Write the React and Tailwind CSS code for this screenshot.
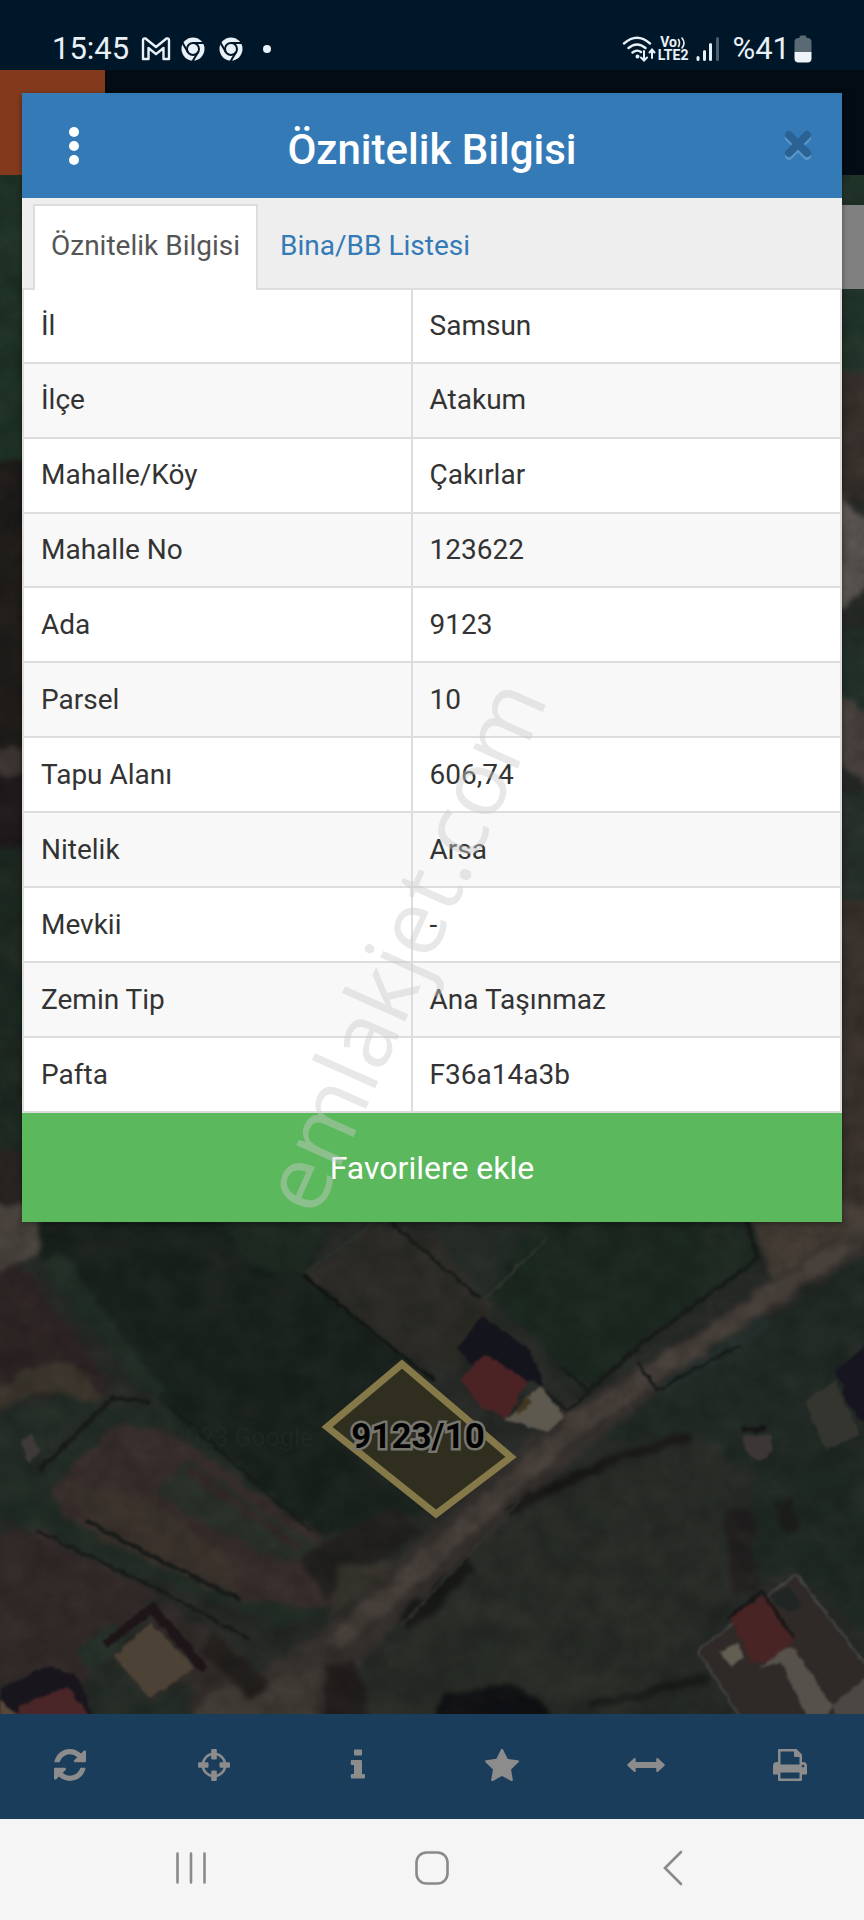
import { useState } from 'react';

const ROWS = [
    ['İl', 'Samsun'],
    ['İlçe', 'Atakum'],
    ['Mahalle/Köy', 'Çakırlar'],
    ['Mahalle No', '123622'],
    ['Ada', '9123'],
    ['Parsel', '10'],
    ['Tapu Alanı', '606,74'],
    ['Nitelik', 'Arsa'],
    ['Mevkii', '-'],
    ['Zemin Tip', 'Ana Taşınmaz'],
    ['Pafta', 'F36a14a3b'],
];

const TABS = ['Öznitelik Bilgisi', 'Bina/BB Listesi'];

const TOOLS = [
    {
        label: 'Yenile',
        icon: (
            <svg width="32" height="32" viewBox="0 0 1536 1536" fill="currentColor">
                <path d="M1511 928q0 5-1 7-64 268-268 434.5T764 1536q-146 0-282.5-55T238 1324l-129 129q-19 19-45 19t-45-19-19-45V960q0-26 19-45t45-19h448q26 0 45 19t19 45-19 45l-137 137q71 66 161 102t187 36q134 0 250-65t186-179q11-17 53-117 8-23 30-23h192q13 0 22.500 9.500t9.500 22.500zm25-800v448q0 26-19 45t-45 19h-448q-26 0-45-19t-19-45 19-45l138-138Q969 256 768 256q-134 0-250 65T332 500q-11 17-53 117-8 23-30 23H50q-13 0-22.500-9.500T18 608v-7q65-268 270-434.500T768 0q146 0 284 55.500T1297 212l130-129q19-19 45-19t45 19 19 45z" />
            </svg>
        ),
    },
    {
        label: 'Konum',
        icon: (
            <svg width="32" height="32" viewBox="0 0 32 32" fill="currentColor">
                <circle cx="16" cy="16" r="11.200" fill="none" stroke="currentColor" strokeWidth="2.600" />
                <rect x="13.200" y="0" width="5.600" height="10.500" rx="1.200" />
                <rect x="13.200" y="21.500" width="5.600" height="10.500" rx="1.200" />
                <rect x="0" y="13.200" width="10.500" height="5.600" rx="1.200" />
                <rect x="21.500" y="13.200" width="10.500" height="5.600" rx="1.200" />
            </svg>
        ),
    },
    {
        label: 'Bilgi',
        icon: (
            <svg width="16" height="32" viewBox="0 0 16 32" fill="currentColor">
                <rect x="4" y="0.500" width="8" height="6" rx="0.800" />
                <path d="M1.800 11H11a1 1 0 0 1 1 1v13h2a1 1 0 0 1 1 1v2.500a1 1 0 0 1-1 1H1.800a1 1 0 0 1-1-1V26a1 1 0 0 1 1-1H4v-9H1.800a1 1 0 0 1-1-1v-3a1 1 0 0 1 1-1z" />
            </svg>
        ),
    },
    {
        label: 'Favoriler',
        icon: (
            <svg width="34" height="34" viewBox="0 20 1664 1620" fill="currentColor">
                <path d="M1664 647q0 22-26 48l-363 354 86 500q1 7 1 20 0 21-10.500 35.500t-30.500 14.500q-19 0-40-12l-449-236-449 236q-22 12-40 12-21 0-31.500-14.500t-10.500-35.500q0-6 2-20l86-500L25 695Q0 669 0 647q0-37 56-46l502-73L783 73q19-41 49-41t49 41l225 455 502 73q56 9 56 46z" />
            </svg>
        ),
    },
    {
        label: 'Ölçüm',
        icon: (
            <svg width="38" height="32" viewBox="0 0 38 32" fill="currentColor">
                <path d="M0.500 15.200 7 9.300q1.400-1 1.700.5V13h20.600V9.800q.3-1.500 1.700-.5l6.500 5.900q.6.800 0 1.600L31 22.700q-1.400 1-1.700-.5V19H8.700v3.200q-.3 1.500-1.700.5L.5 16.800q-.6-.8 0-1.600z" />
            </svg>
        ),
    },
    {
        label: 'Yazdır',
        icon: (
            <svg width="34" height="32" viewBox="0 0 34 32" fill="currentColor">
                <path
                    fillRule="evenodd"
                    d="M6 0h17.500L29 5.500V13h1a4 4 0 0 1 4 4v8.500h-5V31a1 1 0 0 1-1 1H6a1 1 0 0 1-1-1v-5.500H0V17a4 4 0 0 1 4-4h1V1a1 1 0 0 1 1-1zM7.500 2.500v13h19V8H22a1 1 0 0 1-1-1V2.500zM7.500 23.500v6h19v-6zM30 15.800a1.300 1.300 0 1 0 .1 0z"
                />
            </svg>
        ),
    },
];

function ChromeIcon() {
    return (
        <svg width="24" height="24" viewBox="0 0 24 24">
            <circle cx="12" cy="12" r="11.500" fill="#e8f0f8" />
            <circle cx="12" cy="12" r="6" fill="none" stroke="#001729" strokeWidth="2" />
            <path d="M12 6h11M6.800 15 1.300 5.500M17.200 15l-5.500 9" stroke="#001729" strokeWidth="2" />
        </svg>
    );
}

function StatusBar() {
    return (
        <div className="flex h-[70px] items-center justify-between bg-[#001729] px-[52px] pt-7 text-[#e8f0f8]">
            <div className="flex items-center">
                <span className="text-[31px] leading-10">15:45</span>
                <svg className="ml-3" width="30" height="24" viewBox="0 0 30 24" fill="none" stroke="#e8f0f8" strokeWidth="2.400">
                    <path d="M2 22V3.500Q2 1 4.500 1.500L15 10 25.500 1.500Q28 1 28 3.500V22h-5.500V11L15 17.200 7.500 11v11z" strokeLinejoin="round" />
                </svg>
                <div className="ml-2.5 flex gap-3.5">
                    <ChromeIcon />
                    <ChromeIcon />
                </div>
                <span className="ml-5 size-2 rounded-full bg-[#e8f0f8]" />
            </div>
            <div className="flex items-center">
                <svg width="34" height="28" viewBox="0 0 34 28" fill="none" stroke="#e8f0f8" strokeWidth="2.400" strokeLinecap="round">
                    <path d="M2 8.500Q15 -3 28 8.500M6.500 13Q15 6 23.500 13M10.500 17.500Q15 14 19 17" />
                    <circle cx="15.500" cy="21.500" r="0.800" fill="#e8f0f8" />
                    <path d="M22 16v9M19 22.500l3 3 3-3M30 23v-8M27.500 17.500l2.500-3 2.500 3" strokeWidth="2" />
                </svg>
                <div className="ml-0.5 flex flex-col items-center text-[14px] leading-[13px] font-bold">
                    <span className="flex items-center">
                        Vo
                        <svg width="9" height="12" viewBox="0 0 9 12" fill="none" stroke="#e8f0f8" strokeWidth="1.600" strokeLinecap="round">
                            <path d="M1.500 2.500q2 3.500 0 7M5 1q4 5 0 10" />
                        </svg>
                    </span>
                    <span>LTE2</span>
                </div>
                <svg className="ml-2" width="24" height="26" viewBox="0 0 24 26" strokeWidth="3" strokeLinecap="round" stroke="#e8f0f8">
                    <path d="M2 21.500v2M8.500 15.500v8M14.500 8.500v15" />
                    <path d="M21.500 2.500v21" stroke="#4d5d69" />
                </svg>
                <span className="ml-3 text-[31px] leading-10">%41</span>
                <svg className="ml-1" width="18" height="28" viewBox="0 0 18 28">
                    <path d="M5.500 3V2q0-1.500 1.500-1.500h4q1.500 0 1.500 1.500v1h1q4 0 4 4v10H.5V7q0-4 4-4z" fill="#5a6a75" />
                    <path d="M.5 17h17v6.500q0 4-4 4h-9q-4 0-4-4z" fill="#eef4fa" />
                </svg>
            </div>
        </div>
    );
}

function MapView() {
    return (
        <svg
            className="block h-full w-full"
            viewBox="0 175 864 1539"
            preserveAspectRatio="xMidYMax slice"
            role="img"
            aria-label="Uydu haritası"
        >
            <defs>
                <filter id="soft" x="-5%" y="-5%" width="110%" height="110%" colorInterpolationFilters="sRGB">
                    <feTurbulence type="fractalNoise" baseFrequency="0.05" numOctaves="3" seed="3" result="n" />
                    <feDisplacementMap in="SourceGraphic" in2="n" scale="14" xChannelSelector="R" yChannelSelector="G" />
                    <feGaussianBlur stdDeviation="2.500" />
                </filter>
                <filter id="edge" x="-5%" y="-5%" width="110%" height="110%" colorInterpolationFilters="sRGB">
                    <feTurbulence type="fractalNoise" baseFrequency="0.1" numOctaves="2" seed="5" result="n" />
                    <feDisplacementMap in="SourceGraphic" in2="n" scale="6" xChannelSelector="R" yChannelSelector="G" />
                    <feGaussianBlur stdDeviation="1" />
                </filter>
                <filter id="ground" x="0" y="0" width="100%" height="100%" colorInterpolationFilters="sRGB">
                    <feTurbulence type="fractalNoise" baseFrequency="0.02 0.03" numOctaves="4" seed="7" />
                    <feColorMatrix values="0 0 0 0 0.42  0 0 0 0 0.36  0 0 0 0 0.33  1.4 1 0 0 -0.95" />
                </filter>
                <filter id="trees" x="0" y="0" width="100%" height="100%" colorInterpolationFilters="sRGB">
                    <feTurbulence type="fractalNoise" baseFrequency="0.04" numOctaves="4" seed="12" />
                    <feColorMatrix values="0 0 0 0 0.04  0 0 0 0 0.05  0 0 0 0 0.04  0 1.8 0.8 0 -0.95" />
                </filter>
            </defs>

            <rect x="0" y="175" width="864" height="1539" fill="#262a27" />
            <g filter="url(#soft)">
                {/* strips beside the dialog */}
                <path d="M-9 160H30V460H-9z" fill="#1f3327" />
                <path d="M-9 460H30V770H-9z" fill="#1e1b19" />
                <path d="M-9 748H30V774H-9z" fill="#3d3532" />
                <path d="M-9 774H30V850H-9z" fill="#1e181b" />
                <path d="M-9 850H30V1150H-9z" fill="#1c2921" />
                <path d="M-9 1150H30V1240H-9z" fill="#272321" />
                <path d="M835 160H875V400H835z" fill="#1f3329" />
                <path d="M835 370H875V500H835z" fill="#37302c" />
                <path d="M835 490 875 530V580L835 610z" fill="#5b5652" />
                <path d="M835 630H875V740H835z" fill="#22302a" />
                <path d="M835 690 875 720V790L835 760z" fill="#4a4340" />
                <path d="M835 790H875V900H835z" fill="#26302a" />
                <path d="M835 900H875V1240H835z" fill="#3a322d" />

                {/* fields */}
                <path d="M35 1205H345L305 1275 405 1360 325 1430 430 1510 310 1535 160 1400 40 1260z" fill="#19221d" />
                <path d="M210 1205H345L300 1275 250 1265z" fill="#1e2b22" />
                <path d="M40 1265 150 1398 165 1395 60 1250z" fill="#202d25" />
                <path d="M-9 1205H40V1255L-9 1280z" fill="#4a453e" />
                <path d="M-9 1280 18 1265 40 1285 110 1385 95 1405 50 1395 -9 1400z" fill="#2d2424" />
                <path d="M-9 1395Q45 1350 75 1368L105 1395 90 1408 40 1392 -9 1415z" fill="#3c362e" />
                <path d="M-9 1420 60 1395 100 1405 30 1475H-9z" fill="#242d27" />
                <path d="M115 1398 160 1405 310 1530 385 1600 280 1625 -9 1515V1480L40 1470z" fill="#222d26" />
                <path d="M120 1425 170 1432 320 1535 350 1610 290 1605 240 1600 60 1515 55 1490 75 1460z" fill="#382e2c" />
                <path d="M60 1480 150 1500 230 1560 240 1600 100 1540z" fill="#3c332d" />
                <path d="M155 1495 190 1460 330 1555 280 1560z" fill="#29312a" />
                <path d="M190 1470 300 1550" stroke="#342a28" strokeWidth="10" />
                <path d="M-9 1535 35 1530 160 1595 105 1645 85 1680H-9z" fill="#322a29" />
                <path d="M160 1600 240 1650 240 1720H100z" fill="#322d2b" />
                <path d="M75 1650 110 1625 125 1640 90 1675z" fill="#25322a" />
                <path d="M95 1680 125 1660 150 1700 190 1680V1720H100z" fill="#252d27" />
                <path d="M305 1275 375 1220 440 1240 495 1300 460 1370 407 1358z" fill="#2d2c27" />
                <path d="M430 1205H540L485 1300 450 1260z" fill="#242c27" />
                <path d="M540 1205H745L760 1260 640 1345 590 1390 490 1300z" fill="#1c2920" />
                <path d="M745 1205H875V1245L780 1290 765 1260z" fill="#463e37" />
                <path d="M875 1250V1430L790 1490 690 1440 600 1440 660 1390z" fill="#212a25" />
                <path d="M565 1480 720 1440 760 1560 690 1640 620 1720H460L540 1580z" fill="#282c27" />
                <path d="M760 1440 875 1450V1640L795 1570 740 1590z" fill="#1f2923" />

                {/* main road */}
                <path d="M875 1210 800 1262 660 1355 560 1410 430 1530 330 1625 190 1720H330L370 1650 470 1556 590 1446 690 1368 875 1245z" fill="#34302d" />
                <path d="M190 1720 215 1690 320 1668 315 1720z" fill="#403b35" />
                <path d="M880 1215 826 1260 683 1354 579 1422 441 1549 331 1647" fill="none" stroke="#47403b" strokeWidth="20" />
                <path d="M400 1510 420 1530 330 1600 300 1560 350 1525z" fill="#21201e" />
                <path d="M340 1565 400 1560 330 1620z" fill="#35332c" />
                <path d="M770 1318 665 1388" stroke="#25302d" strokeWidth="12" />

                {/* lower middle and trees */}
                <path d="M470 1556 560 1490 570 1560 480 1720H350L400 1620z" fill="#282c27" />
                <path d="M325 1665 355 1660 370 1720H325z" fill="#211d1c" />
                <path d="M435 1725Q435 1685 480 1687 540 1680 555 1725z" fill="#0f1013" />
                <path d="M510 1510 620 1455 690 1437" fill="none" stroke="#181816" strokeWidth="9" />
                <path d="M590 1705 640 1695 710 1677" fill="none" stroke="#181a18" strokeWidth="9" />
                <path d="M405 1625 472 1562" fill="none" stroke="#171917" strokeWidth="18" />
                <path d="M738 1510 745 1590" fill="none" stroke="#211f1f" strokeWidth="26" />
                <path d="M783 1500 790 1530" fill="none" stroke="#1b1d1a" strokeWidth="16" />
                <path d="M205 1642 260 1690" fill="none" stroke="#211e1c" strokeWidth="24" />
            </g>

            <rect x="0" y="175" width="864" height="1539" filter="url(#ground)" opacity="0.120" />
            <rect x="0" y="175" width="864" height="1539" filter="url(#trees)" opacity="0.200" />

            {/* hedges and boundaries */}
            <g fill="none" stroke="#171b19" strokeWidth="2" strokeLinejoin="round" filter="url(#edge)">
                <path d="M303 1275 405 1358 435 1382" stroke="#111512" strokeWidth="3" />
                <path d="M303 1275 375 1222" stroke="#2c332e" />
                <path d="M40 1470 113 1398 150 1402" strokeWidth="4" />
                <path d="M170 1408 310 1530" />
                <path d="M35 1530 160 1590 250 1640" strokeWidth="3" />
                <path d="M85 1520 150 1555 240 1600" strokeWidth="4" />
                <path d="M390 1222 480 1298" strokeWidth="3" />
                <path d="M485 1300 545 1240" stroke="#323833" />
                <path d="M745 1215 758 1258 640 1345 590 1390" strokeWidth="4" />
                <path d="M562 1366 590 1393 567 1410 545 1392" strokeWidth="3" />
                <path d="M638 1362 657 1390 740 1345" strokeWidth="3" />
                <path d="M402 1625 520 1500" stroke="#31332e" />
            </g>

            {/* houses */}
            <g filter="url(#edge)">
                <path d="M458 1348 482 1316 530 1350 544 1385 470 1365z" fill="#14141c" />
                <path d="M461 1380 484 1354 528 1380 505 1420 480 1405z" fill="#4c2325" />
                <path d="M505 1420 540 1386 565 1416 548 1432z" fill="#5e594f" />
                <path d="M518 1412 530 1400" stroke="#42361f" strokeWidth="6" />
                <path d="M105 1645 152 1608 205 1670" fill="none" stroke="#1d1517" strokeWidth="9" />
                <path d="M114 1657 150 1622 195 1668 150 1698z" fill="#4d4236" />
                <path d="M0 1690 50 1665 78 1678 92 1714H0z" fill="#19151d" />
                <path d="M20 1706 68 1686 90 1718H15z" fill="#4a2628" />
                <path d="M0 1700 20 1718H0z" fill="#57463a" />
                <path d="M742 1435H772V1452L758 1462 745 1450z" fill="#3c3736" />
                <path d="M742 1429H766" stroke="#161314" strokeWidth="5" />
                <path d="M836 1370 868 1345V1430L846 1400z" fill="#17151f" />
                <path d="M805 1402 835 1380 860 1435 825 1450z" fill="#353530" />
                <path d="M20 1440 32 1434 40 1450 28 1464z" fill="#3e3a37" />
                <path d="M698 1651 796 1574 868 1668V1720H742z" fill="#2f2a27" stroke="#484a47" strokeWidth="2" />
                <path d="M730 1617 764 1595 794 1640 772 1660 752 1664z" fill="#482424" />
                <path d="M728 1618 762 1592 793 1638" fill="none" stroke="#181516" strokeWidth="3" />
                <path d="M770 1597 788 1585 803 1605 788 1612z" fill="#202624" />
                <path d="M720 1652 738 1642 744 1658 730 1667z" fill="#625e52" />
                <path d="M760 1668 780 1652 792 1645 832 1706 828 1718H808L780 1662z" fill="#56514b" />
                <path d="M832 1705 868 1676V1720H838z" fill="#4c4743" />
            </g>

            <text x="172" y="1446" fontFamily="Roboto, sans-serif" fontSize="25" fill="#27302b" opacity="0.400">
                2023 Google
            </text>

            <path d="M402 1364 327 1427 436 1514 511 1457z" fill="#2f2e1f" stroke="#857849" strokeWidth="7" />
            <text
                x="418"
                y="1448"
                textAnchor="middle"
                fontFamily="Roboto, sans-serif"
                fontSize="35"
                fontWeight="700"
                fill="#030303"
                stroke="#76766f"
                strokeWidth="5"
                paintOrder="stroke"
            >
                9123/10
            </text>
        </svg>
    );
}

function AttributeDialog() {
    const [activeTab, setActiveTab] = useState(0);

    return (
        <section
            role="dialog"
            aria-label="Öznitelik Bilgisi"
            className="absolute inset-x-[22px] top-[93px] flex flex-col bg-white text-[#333333] shadow-[0_2px_6px_rgba(0,0,0,0.4)]"
        >
            <header className="flex h-[105px] items-center justify-between bg-[#337ab7] pr-3 pl-7 text-white">
                <button aria-label="Menü" className="flex h-12 w-12 items-center justify-center">
                    <svg width="10" height="38" viewBox="0 0 10 38" fill="currentColor">
                        <circle cx="5" cy="5" r="5" />
                        <circle cx="5" cy="19" r="5" />
                        <circle cx="5" cy="33" r="5" />
                    </svg>
                </button>
                <h1 className="pt-2 text-[42px] leading-[52px] font-medium">Öznitelik Bilgisi</h1>
                <button aria-label="Kapat" className="flex h-12 w-16 items-center justify-center">
                    <svg width="28" height="31" viewBox="0 0 28 31" fill="none" strokeWidth="8" strokeLinecap="round">
                        <path d="M5 8l18 18M23 8 5 26" stroke="#5b95c6" />
                        <path d="M5 5l18 18M23 5 5 23" stroke="#2a6294" />
                    </svg>
                </button>
            </header>

            <div role="tablist" className="flex h-[92px] items-end border-b-2 border-[#dddddd] bg-[#eeeeee] pl-[11px] text-[28px]">
                {TABS.map((tab, idx) => (
                    <button
                        key={tab}
                        role="tab"
                        aria-selected={activeTab === idx}
                        onClick={() => setActiveTab(idx)}
                        className={
                            activeTab === idx
                                ? '-mb-0.5 h-[86px] border-2 border-b-0 border-[#dddddd] bg-white px-4 pb-1 text-[#555555]'
                                : '-mb-0.5 h-[86px] border-2 border-b-0 border-transparent px-5 pb-1 text-[#337ab7]'
                        }
                    >
                        {tab}
                    </button>
                ))}
            </div>

            <table className="h-[823px] w-full table-fixed border-collapse border-x-2 border-[#dddddd] text-[28px] leading-8">
                <tbody>
                    {ROWS.map(([name, value]) => (
                        <tr key={name} className="border-b-2 border-[#dddddd] odd:bg-white even:bg-[#f8f8f8]">
                            <th scope="row" className="w-[47.5%] border-r-2 border-[#dddddd] px-[17px] text-left font-normal">
                                {name}
                            </th>
                            <td className="px-[17px]">{value}</td>
                        </tr>
                    ))}
                </tbody>
            </table>

            <button className="h-[109px] bg-[#5cb85c] text-[32px] text-white">Favorilere ekle</button>
        </section>
    );
}

function Toolbar() {
    return (
        <nav className="grid h-[105px] grid-cols-6 bg-[#1a3d5c] text-[#8c8c8c]">
            {TOOLS.map(({ label, icon }) => (
                <button key={label} aria-label={label} className="flex items-center justify-center pr-1 pb-1">
                    {icon}
                </button>
            ))}
        </nav>
    );
}

function SystemNav() {
    return (
        <nav className="grid h-[101px] grid-cols-3 items-center justify-items-center bg-[#f5f5f5] px-[70px] pb-1 text-[#8a8a8a]">
            <button aria-label="Son uygulamalar">
                <svg width="32" height="34" viewBox="0 0 32 34" stroke="currentColor" strokeWidth="2.600" strokeLinecap="round">
                    <path d="M2.500 2.500v29M16 2.500v29M29.500 2.500v29" />
                </svg>
            </button>
            <button aria-label="Ana ekran">
                <svg width="34" height="34" viewBox="0 0 34 34" fill="none" stroke="currentColor" strokeWidth="2.600">
                    <rect x="1.500" y="1.500" width="31" height="31" rx="10" />
                </svg>
            </button>
            <button aria-label="Geri">
                <svg width="20" height="36" viewBox="0 0 20 36" fill="none" stroke="currentColor" strokeWidth="2.600" strokeLinecap="round">
                    <path d="M18 2 2 18l16 16" />
                </svg>
            </button>
        </nav>
    );
}

export default function App() {
    return (
        <div className="relative flex min-h-screen flex-col overflow-hidden bg-[#222824] font-[Roboto,'Noto_Sans',sans-serif]">
            <StatusBar />
            <div className="flex h-[105px] bg-[#030c14]">
                <div className="w-[105px] bg-[#833a1c]" />
            </div>
            <main className="relative min-h-[1539px] flex-1">
                <MapView />
                <div className="absolute top-[30px] right-0 h-[84px] w-12 bg-[#808080]" />
            </main>
            <Toolbar />
            <SystemNav />

            <AttributeDialog />

            <svg
                className="pointer-events-none absolute top-0 left-1/2 h-[1920px] w-[864px] -translate-x-1/2"
                viewBox="0 0 864 1920"
            >
                <text
                    transform="translate(317 1219) rotate(-66)"
                    fontFamily="'Open Sans', sans-serif"
                    fontSize="91"
                    fill="#cacaca"
                    fillOpacity="0.430"
                >
                    emlakjet.com
                </text>
            </svg>
        </div>
    );
}
